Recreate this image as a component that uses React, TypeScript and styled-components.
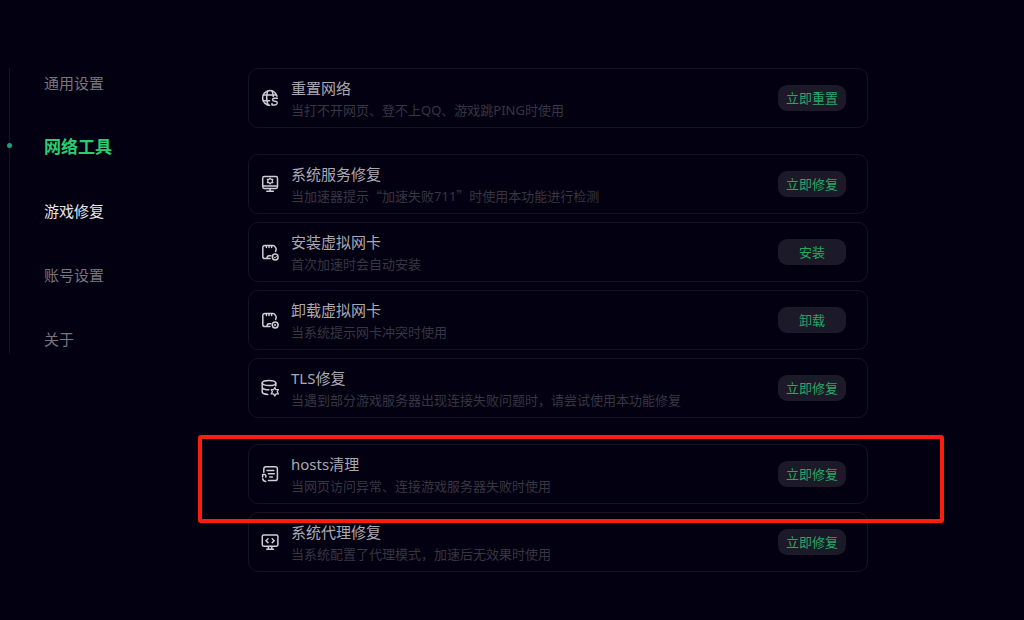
import React from 'react';
import styled, { createGlobalStyle } from 'styled-components';

const GlobalStyle = createGlobalStyle`
  * { box-sizing: border-box; }
  body {
    margin: 0;
    background: #030011;
    font-family: "Noto Sans", "Noto Sans CJK SC", sans-serif;
  }
`;

const Page = styled.div`
  display: flex;
  align-items: flex-start;
  min-height: 100vh;
  padding: 68px 0 48px;
`;

const Nav = styled.nav`
  display: flex;
  flex-direction: column;
  flex: 0 0 160px;
  gap: 34px;
  margin: 0 79px 0 9px;
  padding-left: 34px;
  border-left: 1px solid #151420;
`;

const NavLink = styled.a<{ $tone: 'muted' | 'bright' | 'active' }>`
  position: relative;
  font-size: ${p => (p.$tone === 'active' ? 17 : 15)}px;
  font-weight: ${p => (p.$tone === 'active' ? 700 : 400)};
  line-height: 30px;
  text-decoration: none;
  color: ${p => ({ muted: '#77767e', bright: '#e6e6ea', active: '#2ecc71' })[p.$tone]};
`;

const Dot = styled.span`
  position: absolute;
  top: 11px;
  left: -37px;
  width: 5px;
  height: 5px;
  border-radius: 50%;
  background: #08ab78;
`;

const Main = styled.main`
  display: flex;
  flex: 1;
  flex-direction: column;
  gap: 26px;
  min-width: 0;
  margin-right: 156px;
`;

const Group = styled.section`
  display: flex;
  flex-direction: column;
  gap: 8px;
`;

const Card = styled.article`
  position: relative;
  display: flex;
  align-items: center;
  gap: 12px;
  min-height: 60px;
  padding: 7px 21px 7px 12px;
  border: 1px solid #151420;
  border-radius: 10px;
`;

const Highlight = styled.div`
  position: absolute;
  z-index: 1;
  top: -10px;
  right: -77px;
  bottom: -20px;
  left: -51px;
  border: 4px solid #fc1d11;
  border-radius: 3px;
  pointer-events: none;
`;

const Icon = styled.svg`
  flex: none;
  width: 18px;
  height: 18px;
  fill: none;
  stroke: #cfced5;
  stroke-width: 1.5;
  stroke-linecap: round;
  stroke-linejoin: round;
`;

const Text = styled.div`
  flex: 1;
  min-width: 0;
`;

const Title = styled.h2`
  margin: 0;
  font-size: 15px;
  font-weight: 400;
  line-height: 24px;
  color: #aaa9b0;
`;

const Description = styled.p`
  margin: 0;
  font-size: 13px;
  line-height: 20px;
  color: #373641;
`;

const WideQuote = styled.span`
  font-family: "Noto Sans CJK SC", sans-serif;
`;

const Action = styled.button`
  width: 68px;
  height: 26px;
  padding: 0;
  border: 0;
  border-radius: 9px;
  background: #1c1a28;
  font-family: inherit;
  font-size: 13px;
  line-height: 26px;
  color: #2ba566;
  cursor: pointer;
`;

const CARD_BODY = 'M14.6 8.4 L15.2 6.6 Q15.4 5.4 14.2 4 Q13.4 2.4 12 2.4 H4 Q1.8 2.4 1.8 4.6 V13.4 Q1.8 15.6 4 15.6 H9 M6 15.4 Q6 12.8 8 12.8 H9.8 M5.4 2.8 V4.6 M8 2.8 V4.6 M10.6 2.8 V4.6';

const icons = {
  globe: (
    <>
      <path d="M16 7.2 A7.3 7.3 0 1 0 8.6 16.2" />
      <path d="M6.6 2 Q4.6 9 7 16 M11 2 Q12.2 4.6 12.2 7.6 M2.4 6 H15.4 M2 11.8 H8.6" />
      <path d="M16.4 9.2 H13.2 Q11.4 9.4 11.6 10.8 Q11.8 12.2 14 12.2 Q16.4 12.4 16.2 14.2 Q15.8 16.2 13.4 16 H11 V14.6" />
    </>
  ),
  service: (
    <>
      <rect x="1.7" y="1.6" width="14.8" height="11.8" rx="1.6" />
      <path d="M2 11 H16.2 M9.1 13.4 V15.8 M5.8 16.2 H12.4" />
      <path
        d="M9.1 3 L10.1 4.4 H11.9 L11.1 6 L11.9 7.6 H10.1 L9.1 9 L8.1 7.6 H6.3 L7.1 6 L6.3 4.4 H8.1 Z"
        strokeWidth="1.2"
      />
    </>
  ),
  install: (
    <>
      <path d={CARD_BODY} />
      <circle cx="14.2" cy="14" r="2.9" />
      <path d="M13 14 L14 14.9 L15.6 13.1" strokeWidth="1" />
    </>
  ),
  uninstall: (
    <>
      <path d={CARD_BODY} />
      <circle cx="14.2" cy="14" r="2.9" />
      <path d="M13.4 13.2 L15 14.8 M15 13.2 L13.4 14.8" strokeWidth="1" />
    </>
  ),
  database: (
    <>
      <ellipse cx="8" cy="4" rx="6.8" ry="2.6" />
      <path d="M1.2 4 V13 Q1.6 15 6.8 15.4 M14.8 4 V7 M1.2 8.4 Q2 10.6 7.8 10.8" />
      <path d="M13.8 8.6 L15 10.7 H17.4 L16.2 12.8 L17.4 14.9 H15 L13.8 17 L12.6 14.9 H10.2 L11.4 12.8 L10.2 10.7 H12.6 Z" strokeWidth="1.3" />
    </>
  ),
  hosts: (
    <>
      <path d="M2.8 7.2 V4 Q2.8 1.8 5 1.8 H14.2 Q16.4 1.8 16.4 4 V13.4 Q16.4 15.6 14.2 15.6 H7.4" />
      <path d="M6 5.4 H12.8 M7.4 8.8 H13.4 M8.8 12 H11.4" />
      <path d="M1.6 12 V9.6 H4.2 Q5.4 10.4 4.8 12 M4.8 16.4 Q1.8 16.2 1.8 13.8" />
    </>
  ),
  proxy: (
    <>
      <rect x="1.3" y="2" width="15.6" height="11.2" rx="1.4" />
      <path d="M7 5.8 L5 7.7 L7 9.6 M11.2 5.8 L13.2 7.7 L11.2 9.6 M7.4 13.4 V15.8 M10.8 13.4 V15.8 M5.8 16.2 H12.4" />
    </>
  ),
};

type Tool = {
  icon: keyof typeof icons;
  title: string;
  description: React.ReactNode;
  action: string;
  highlighted?: boolean;
};

const groups: Tool[][] = [
  [{ icon: 'globe', title: '重置网络', description: '当打不开网页、登不上QQ、游戏跳PING时使用', action: '立即重置' }],
  [
    {
      icon: 'service',
      title: '系统服务修复',
      description: (
        <>
          当加速器提示<WideQuote>“</WideQuote>加速失败711<WideQuote>”</WideQuote>时使用本功能进行检测
        </>
      ),
      action: '立即修复',
    },
    { icon: 'install', title: '安装虚拟网卡', description: '首次加速时会自动安装', action: '安装' },
    { icon: 'uninstall', title: '卸载虚拟网卡', description: '当系统提示网卡冲突时使用', action: '卸载' },
    {
      icon: 'database',
      title: 'TLS修复',
      description: '当遇到部分游戏服务器出现连接失败问题时，请尝试使用本功能修复',
      action: '立即修复',
    },
  ],
  [
    {
      icon: 'hosts',
      title: 'hosts清理',
      description: '当网页访问异常、连接游戏服务器失败时使用',
      action: '立即修复',
      highlighted: true,
    },
    { icon: 'proxy', title: '系统代理修复', description: '当系统配置了代理模式，加速后无效果时使用', action: '立即修复' },
  ],
];

export default function App() {
  return (
    <Page lang="zh-CN">
      <GlobalStyle />
      <Nav>
        <NavLink href="#general" $tone="muted">通用设置</NavLink>
        <NavLink href="#network" $tone="active" aria-current="page">
          <Dot />
          网络工具
        </NavLink>
        <NavLink href="#games" $tone="bright">游戏修复</NavLink>
        <NavLink href="#account" $tone="muted">账号设置</NavLink>
        <NavLink href="#about" $tone="muted">关于</NavLink>
      </Nav>
      <Main>
        {groups.map((tools, index) => (
          <Group key={index}>
            {tools.map(tool => (
              <Card key={tool.title}>
                <Icon viewBox="0 0 18 18" aria-hidden="true">{icons[tool.icon]}</Icon>
                <Text>
                  <Title>{tool.title}</Title>
                  <Description>{tool.description}</Description>
                </Text>
                <Action type="button">{tool.action}</Action>
                {tool.highlighted && <Highlight />}
              </Card>
            ))}
          </Group>
        ))}
      </Main>
    </Page>
  );
}
